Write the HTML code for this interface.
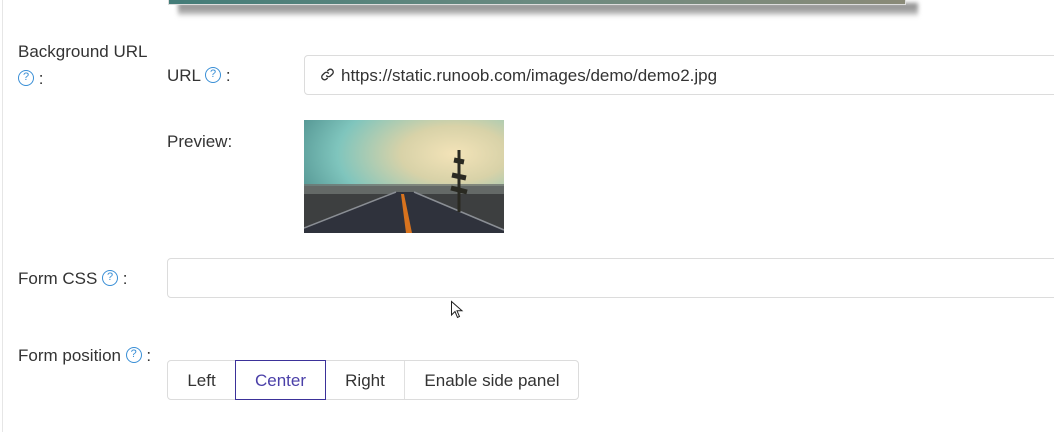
<!DOCTYPE html>
<html><head><meta charset="utf-8"><style>
*{box-sizing:border-box;margin:0;padding:0}
body{width:1054px;height:432px;background:#fff;font-family:"Liberation Sans",sans-serif;font-size:17px;color:#333;position:relative;overflow:hidden}
.a{position:absolute}
.q{display:inline-block;width:16px;height:16px;border:1.3px solid #3a8fd6;border-radius:50%;color:#3a8fd6;font-size:11px;line-height:13px;text-align:center;vertical-align:middle;position:relative;top:-2px}
.inp{border:1px solid #dcdcdc;border-radius:4px;background:#fff}
.seg{position:absolute;top:360px;height:40px;line-height:41px;text-align:center;color:#333}
</style></head><body>
<div class="a" style="left:2px;top:0;width:1px;height:432px;background:#e6e6e6"></div>
<div class="a" style="left:178px;top:3px;width:740px;height:14px;background:linear-gradient(#888,#aaa 60%,rgba(255,255,255,0));filter:blur(2px)"></div>
<div class="a" style="left:168px;top:0;width:738px;height:5px;background:linear-gradient(90deg,#437c78,#6b8a80 50%,#8a8a78);border:1px solid #ddd;border-top:none"></div>

<div class="a" style="left:18px;top:42px">Background URL</div>
<div class="a" style="left:18px;top:69px"><span class="q">?</span> :</div>
<div class="a" style="left:167px;top:66px">URL <span class="q">?</span> :</div>
<div class="a inp" style="left:304px;top:55px;width:760px;height:40px"></div>
<svg class="a" style="left:320px;top:67px" width="15" height="15" viewBox="0 0 16 16" fill="none" stroke="#333" stroke-width="1.5" stroke-linecap="round"><path d="M7 9.5a3 3 0 0 0 4.2 0l2.3-2.3a3 3 0 0 0-4.2-4.2L8.2 4"/><path d="M9 6.5a3 3 0 0 0-4.2 0L2.5 8.8a3 3 0 0 0 4.2 4.2L7.8 12"/></svg>
<div class="a" style="left:341px;top:66px">https://static.runoob.com/images/demo/demo2.jpg</div>

<div class="a" style="left:167px;top:132px">Preview:</div>
<div class="a" style="left:304px;top:120px;width:200px;height:113px;overflow:hidden;background:radial-gradient(ellipse at 75% 30%,#f3e3b8 0%,#d8d2a8 25%,#7fc5bd 55%,#2d6a6c 100%)">
 <svg class="a" style="left:0;top:0" width="200" height="113"><rect x="0" y="66" width="200" height="47" fill="#3d3f40"/><rect x="0" y="64" width="200" height="10" fill="#6e7470" opacity=".8"/><polygon points="92,72 110,72 200,110 200,113 0,113 0,108" fill="#2f323c"/><path d="M92 72 L0 108 M110 72 L200 110" stroke="#8a8e94" stroke-width="1.5"/><polygon points="97,74 100,74 108,113 102,113" fill="#d8731e"/><path d="M155 30 L155 92" stroke="#2a2a22" stroke-width="3"/><path d="M150 40 L160 42 M148 55 L162 58 M147 68 L163 72" stroke="#2a2a22" stroke-width="5"/></svg>
</div>

<div class="a" style="left:18px;top:269px">Form CSS <span class="q">?</span> :</div>
<div class="a inp" style="left:167px;top:258px;width:900px;height:40px"></div>
<svg class="a" style="left:450px;top:300px" width="14" height="20" viewBox="0 0 14 20"><path d="M1.5 1.5 L1.5 15 L5 11.5 L7.5 17.5 L9.5 16.5 L7 10.8 L12 10.8 Z" fill="#fff" stroke="#222" stroke-width="1"/></svg>

<div class="a" style="left:18px;top:346px">Form position <span class="q">?</span> :</div>
<div class="a inp" style="left:167px;top:360px;width:412px;height:40px"></div>
<div class="seg" style="left:167px;width:69px">Left</div>
<div class="seg" style="left:235px;width:91px;border:1px solid #3b3199;color:#4a3fa8;line-height:39px">Center</div>
<div class="seg" style="left:326px;width:78px">Right</div>
<div class="a" style="left:404px;top:361px;width:1px;height:38px;background:#e0e0e0"></div>
<div class="seg" style="left:405px;width:174px">Enable side panel</div>
</body></html>
